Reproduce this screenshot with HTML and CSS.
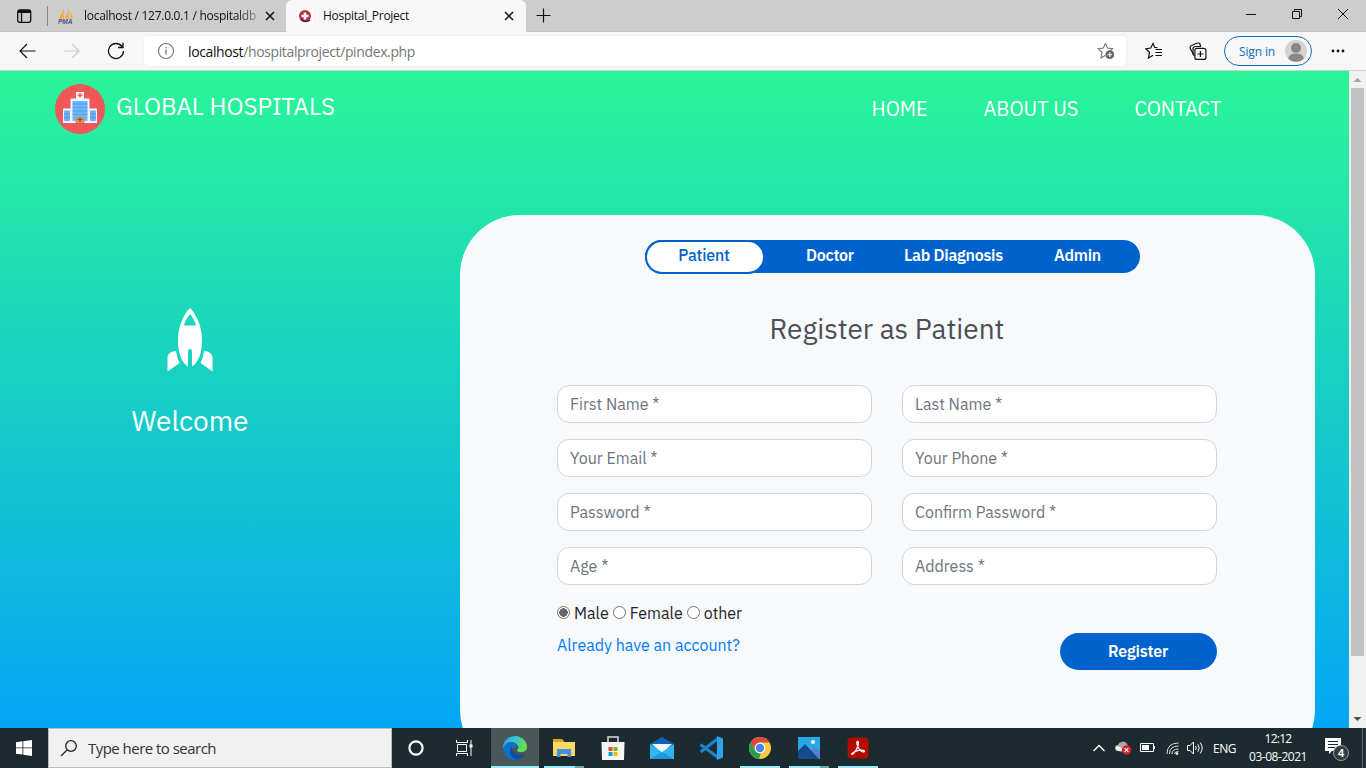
FILE: index.html
```html
<!DOCTYPE html>
<html lang="en">
<head>
<meta charset="utf-8">
<title>Hospital_Project</title>
<link rel="stylesheet" href="styles.css">
</head>
<body>
<div class="screen">
  <header class="tabstrip">
    <svg class="tab-menu" width="16" height="16" viewBox="0 0 16 16" fill="none" stroke="#111" stroke-width="1.3"><rect x="1.7" y="2" width="13" height="12.300" rx="2"/><path d="M2 4h12.500M2 3h12.500" stroke-width="2"/><path d="M5.500 5v9"/></svg>
    <div class="tab tab-back">
      <svg width="16" height="16" viewBox="0 0 16 16"><path d="M6 1 1 10.500h5zM11 0 7 10.500h4zM12 3v7.500h3z" fill="#f8a13a"/><path d="M5 4v6M10 3v7M13 6v4" stroke="#ffd08a" stroke-width=".6"/><text x="0" y="15.500" class="pma">PMA</text></svg>
      <span class="tab-title t-back">localhost / 127.0.0.1 / hospitaldb</span>
      <svg class="x" width="10" height="10" viewBox="0 0 10 10" stroke="#111" stroke-width="1.500"><path d="m1 1 8 8M9 1 1 9"/></svg>
    </div>
    <div class="tab tab-front">
      <svg width="16" height="16" viewBox="0 0 16 16"><path fill="#fff" d="M0 0h16v16H0z"/><circle cx="8" cy="8" r="6" fill="#b92c3f"/><path d="M4 11a6 6 0 0 0 9 1" stroke="#5c1c2c" fill="none" stroke-width="1.500"/><path d="M8 4.500v7M4.500 8h7" stroke="#fff" stroke-width="2.600"/></svg>
      <span class="tab-title t-front">Hospital_Project</span>
      <svg class="x" width="10" height="10" viewBox="0 0 10 10" stroke="#111" stroke-width="1.500"><path d="m1 1 8 8M9 1 1 9"/></svg>
    </div>
    <svg class="newtab" width="15" height="15" viewBox="0 0 15 15" stroke="#111" stroke-width="1.200"><path d="M7.500.5v14M.5 7.500h14"/></svg>
    <div class="winctl">
      <svg width="12" height="12" viewBox="0 0 12 12" stroke="#111"><path d="M1 6.500h10"/></svg>
      <svg width="12" height="12" viewBox="0 0 12 12" stroke="#111" fill="none"><path d="M1.500 3.500h7v7h-7zM3.500 3V1.500h7v7H9"/></svg>
      <svg width="12" height="12" viewBox="0 0 12 12" stroke="#111"><path d="m1 1 10 10M11 1 1 11"/></svg>
    </div>
  </header>

  <div class="toolbar">
    <svg class="back" width="18" height="16" viewBox="0 0 18 16" fill="none" stroke="#111" stroke-width="1.200"><path d="M9 1 2 8l7 7M2 8h15.500"/></svg>
    <svg class="forward" width="18" height="16" viewBox="0 0 18 16" fill="none" stroke="#ccc" stroke-width="1.200"><path d="m9 1 7 7-7 7M16 8H.5"/></svg>
    <svg class="reload" width="18" height="18" viewBox="0 0 18 18" fill="none" stroke="#111" stroke-width="1.300"><path d="M15 4.500A7.500 7.500 0 1 0 16.500 9M16 .8V5.500h-5"/></svg>
    <div class="address">
      <svg width="18" height="18" viewBox="0 0 18 18" fill="none" stroke="#757575" stroke-width="1.100"><circle cx="9" cy="9" r="7.500"/><path d="M9 7.500v5M9 5v1.300" stroke-width="1.300"/></svg>
      <span class="url"><b>localhost</b>/hospitalproject/pindex.php</span>
      <svg class="addfav" width="18" height="18" viewBox="0 0 18 18" fill="none" stroke="#777" stroke-width="1.100"><path d="m8.500 1.300 2.100 4.800 5 .5-3.400 3.500M8.200 13.500 4 16l1-5.500L1.200 6.600l5.200-.6 2.100-4.700"/><circle cx="12.800" cy="12.700" r="4.400" fill="#666" stroke="none"/><path d="M12.800 10.300v4.800M10.400 12.700h4.800" stroke="#fff"/></svg>
    </div>
    <svg class="favs" width="18" height="18" viewBox="0 0 18 18" fill="none" stroke="#111" stroke-width="1.200"><path d="M12.500 5.700 9.800 5.500 8 1.500 5.800 6l-5 .7 3.700 3.500-1 5.800L8 13.200M10.500 7.500H17M10.500 10.500H17M10.500 13.500H17"/></svg>
    <svg class="collect" width="18" height="18" viewBox="0 0 18 18" fill="none" stroke="#111" stroke-width="1.200"><path d="M4.500 12.500 1.300 6.500Q.7 4.300 2.500 3.500L7 1.500q2-.8 3.600-.3l1 2.800"/><path d="M5.500 14Q4 13 4 11V7q0-2.500 2.500-2.500H12"/><rect x="5.900" y="6.400" width="11" height="11" rx="2"/><path d="M11.400 9v6M8.400 12h6"/></svg>
    <div class="signin"><span class="signin-t">Sign in</span><svg width="22" height="22" viewBox="0 0 22 22"><circle cx="11" cy="11" r="11" fill="#d5d2d0"/><circle cx="11" cy="8" r="5" fill="#8b8583"/><path d="M3.200 18.500Q4 13.500 11 13.500t7.800 5A11 11 0 0 1 3.200 18.500z" fill="#8b8583"/></svg></div>
    <svg class="more" width="14" height="4" viewBox="0 0 14 4" fill="#111"><circle cx="2" cy="2" r="1.400"/><circle cx="7" cy="2" r="1.400"/><circle cx="12" cy="2" r="1.400"/></svg>
  </div>

  <div class="viewport">
    <div class="page">
      <nav class="nav">
        <svg class="logo" width="50" height="50" viewBox="0 0 50 50"><circle cx="25" cy="25" r="25" fill="#ef5858"/><path fill="#f3f6fa" d="M8 24.500h34V39H8zM15.500 14.500h19V39h-19zM21 8h8v7h-8z"/><path fill="#6db5fc" d="M17.500 17h15v20h-15zM9 26.500h6V37H9zM35 26.500h6V37h-6z"/><path stroke="#4f9bee" stroke-width=".8" d="M17.500 20h15M17.500 23.500h15M17.500 27h15M17.500 30.500h15M9 30h6M9 33.500h6M35 30h6M35 33.500h6M12 27v10M38 27v10"/><path fill="#c9976b" d="M20.500 32.500h9V39h-9z"/><path stroke="#7a543c" stroke-width="1.200" d="M25 33v5M22.500 35.500h5"/><path stroke="#ef5858" stroke-width="1.500" d="M25 9v4.500M22.800 11.200h4.500"/></svg>
        <span class="brand">GLOBAL HOSPITALS</span>
        <a class="link home">HOME</a>
        <a class="link about">ABOUT US</a>
        <a class="link contact">CONTACT</a>
      </nav>
      <main class="main">
        <aside class="side">
          <svg width="46" height="66" viewBox="0 0 46 66" fill="#fff"><path fill-rule="evenodd" d="M23 1C17 7 11 19 11 33c0 14 4 23 10 26.500V44a2 2 0 0 1 4 0v15.500C31 56 35 47 35 33 35 19 29 7 23 1zm0 6c3 3.500 5 7 6 11.500H17c1-4.500 3-8 6-11.500z"/><path d="M9 44C4 44 .5 47 .5 51v13.500L12.500 56Q10 51 9 44zM37 44c5 0 8.500 3 8.500 7v13.500L33.500 56Q36 51 37 44z"/></svg>
          <h3 class="welcome">Welcome</h3>
        </aside>
        <section class="card">
          <div class="roles">
            <span class="role active">Patient</span>
            <span class="role doctor">Doctor</span>
            <span class="role lab">Lab Diagnosis</span>
            <span class="role admin">Admin</span>
          </div>
          <h3 class="heading">Register as Patient</h3>
          <form class="form">
            <input class="field" placeholder="First Name *">
            <input class="field" placeholder="Last Name *">
            <input class="field" placeholder="Your Email *">
            <input class="field" placeholder="Your Phone *">
            <input class="field" placeholder="Password *">
            <input class="field" placeholder="Confirm Password *">
            <input class="field" placeholder="Age *">
            <input class="field" placeholder="Address *">
            <div class="left">
              <div class="gender">
                <label><i class="dot on"></i>Male</label>
                <label><i class="dot"></i>Female</label>
                <label><i class="dot"></i>other</label>
              </div>
              <a class="already">Already have an account?</a>
            </div>
            <button class="register" type="button">Register</button>
          </form>
        </section>
      </main>
    </div>
    <div class="scroll">
      <svg width="17" height="17" viewBox="0 0 17 17"><path d="M4.500 11 8.500 7l4 4z" fill="#a3a3a3"/></svg>
      <div class="thumb"></div>
      <svg width="17" height="17" viewBox="0 0 17 17"><path d="m4.500 6 4 4 4-4z" fill="#505050"/></svg>
    </div>
  </div>

  <footer class="taskbar">
    <div class="start"><svg width="16" height="16" viewBox="0 0 16 16" fill="#fff"><path d="M0 2.200 6.500 1.300v6.200H0zM7.300 1.200 16 0v7.500H7.300zM0 8.300h6.500v6.300L0 13.700zM7.300 8.300H16V16l-8.700-1.300z"/></svg></div>
    <div class="search"><svg width="18" height="18" viewBox="0 0 18 18" fill="none" stroke="#222" stroke-width="1.300"><circle cx="11" cy="7" r="5.300"/><path d="m7 11-6 6"/></svg><span class="search-t">Type here to search</span></div>
    <div class="cell c48"><svg width="16" height="16" viewBox="0 0 16 16"><circle cx="8" cy="8" r="6.600" fill="none" stroke="#fff" stroke-width="2.200"/></svg></div>
    <div class="cell c51"><svg width="17" height="16" viewBox="0 0 17 16" fill="none" stroke="#fff"><path d="M.5 0v2.500h11V0M.5 16v-2.500h11V16M1.500 4.500h9v7h-9zM15 0v16"/><path d="M13.500 4.500h3v3h-3z" fill="#fff" stroke="none"/></svg></div>
    <div class="cell current"><svg width="24" height="24" viewBox="0 0 24 24"><defs><linearGradient id="eg" x1="0" y1="0" x2="1" y2=".4"><stop offset="0" stop-color="#2aa7dc"/><stop offset=".5" stop-color="#35c1d8"/><stop offset="1" stop-color="#68e04c"/></linearGradient></defs><path fill="#0c71c9" d="M0 12Q1 6 8 6q6 0 7.500 5Q11 9 9 13q-1 6 6 7 4 0 7-3-4 7-11 7Q1 23 0 12z"/><path fill="url(#eg)" d="M0 12C0 5 5 0 12 0s12 5 12 11q0 5-6 5-4 0-4-2 1.500-1 1.500-3C15 8 12 6 8 6Q3 6 0 12z"/><path fill="#0b4f9e" d="M8.500 10C5 16 8 23 14 23.500c4-.5 7-4 8.200-6.200Q18 20 13.500 18 8.500 15.500 8.500 10z"/></svg></div>
    <div class="cell run split"><svg width="22" height="20" viewBox="0 0 22 20"><path fill="#e5a11b" d="M0 1h9l2 2v3H0z"/><path fill="#ffd767" d="M0 4h22v14H0z"/><path fill="#3d94d9" d="M4 11h14v8h-3.500v-3h-7v3H4z"/></svg></div>
    <div class="cell"><svg width="24" height="24" viewBox="0 0 24 24"><path d="M7 7V1h10v6" stroke="#ddd" stroke-width="1.500" fill="none"/><path fill="#f5f5f5" d="M.5 6h23l-.5 18H1z"/><path fill="#e84c24" d="M7.500 11h4v4h-4z"/><path fill="#7fba00" d="M12.500 11h4v4h-4z"/><path fill="#00a4ef" d="M7.500 16h4v4h-4z"/><path fill="#ffb900" d="M12.500 16h4v4h-4z"/></svg></div>
    <div class="cell"><svg width="24" height="22" viewBox="0 0 24 22"><path fill="#0f64b4" d="M0 7 12 0l12 7v7H0z"/><path fill="#f4f8fc" d="M2 7h20l-8 8h-4z"/><path fill="#31b5f1" d="m0 7 12 8L24 7v15H0z"/><path fill="#2395df" d="M0 22 12 15l12 7z"/></svg></div>
    <div class="cell"><svg width="24" height="24" viewBox="0 0 24 24"><path fill="none" stroke="#1b83cc" stroke-width="3.200" d="M19 2.500 1.500 16M1.500 8.500 19 21.500"/><path fill="#2ba4ec" d="m18 0 6 2.500v19L18 24z"/></svg></div>
    <div class="cell run"><svg width="22" height="22" viewBox="0 0 22 22"><circle cx="11" cy="11" r="11" fill="#fbcd3e"/><path fill="#d84b3e" d="M1.500 5.500A11 11 0 0 1 20.500 5.500H11L6.200 13.500z"/><path fill="#2b9c50" d="M1.500 5.500 6.200 13.500Q8 16.500 12 16L10 22A11 11 0 0 1 1.500 5.500z"/><circle cx="11" cy="11" r="5.400" fill="#fff"/><circle cx="11" cy="11" r="4.200" fill="#4384ed"/></svg></div>
    <div class="cell run split"><svg width="22" height="22" viewBox="0 0 22 22"><path fill="#28a7e9" d="M0 0h22v22H0z"/><path fill="#5c7fcc" d="m11 15 6-5 5 4v8H11z"/><path fill="#164a89" d="M0 14 7 7l14 15H0z"/><circle cx="15" cy="5" r="2" fill="#fff"/></svg></div>
    <div class="cell run"><svg width="22" height="22" viewBox="0 0 22 22"><rect x=".5" y=".5" width="21" height="21" rx="4" fill="#b30b00"/><path d="M10.500 4.500c-1.500 0 0 6 2.500 8.500s4.500 2 4.500 1-6-1.500-10 .8-3 3.200-1.500 2.200C8.500 15 12 8 11.500 5.500q-.3-1-1-1z" fill="none" stroke="#fff" stroke-width="1.300"/></svg></div>
    <div class="tray">
      <svg class="chev" width="12" height="8" viewBox="0 0 12 8" fill="none" stroke="#fff" stroke-width="1.300"><path d="m.5 7 5.500-5.500L11.500 7"/></svg>
      <svg class="cloud" width="17" height="14" viewBox="0 0 17 14"><path d="M3 10a3 3 0 0 1 0-6 5 5 0 0 1 9-1l2 4-6 4z" fill="#aaa"/><path d="M1 5q5 0 8 5H3Q0 9 1 5z" fill="#eee"/><circle cx="11.500" cy="9" r="4.700" fill="#d9262c"/><path d="m9.700 7.200 3.600 3.600M13.300 7.200l-3.600 3.600" stroke="#fff" stroke-width="1.200"/></svg>
      <svg class="batt" width="16" height="10" viewBox="0 0 16 10"><path d="M.5.5h13v8H.5zM14.500 3v3" fill="none" stroke="#fff"/><path d="M2 2h7v5H2z" fill="#fff"/></svg>
      <svg class="wifi" width="13" height="13" viewBox="0 0 13 13" fill="none" stroke="#ddd"><path d="M1 12Q1 1 12.500 1M3.500 12Q3.500 4 12.500 4M6 12q0-5 6.500-5M8.500 12q0-2.500 4-2.500"/><circle cx="11" cy="11.500" r="1" fill="#fff"/></svg>
      <svg class="vol" width="17" height="14" viewBox="0 0 17 14" fill="none" stroke="#fff"><path d="M.5 4.500h2.500L6.500 1v12L3 9.500H.5zM8.500 5q1.500 2 0 4M10.800 3.300q3 3.700 0 7.400M13.200 1.500q4 5.500 0 11"/></svg>
      <span class="lang">ENG</span>
      <div class="clock"><span class="time">12:12</span><span class="date">03-08-2021</span></div>
      <svg class="notif" width="26" height="26" viewBox="0 0 26 26"><path fill="#fff" d="M1 1h16v13H8l-3 3v-3H1z"/><path d="M4 4.500h10M4 7.500h10M4 10.500h7" stroke="#1c2b2f"/><circle cx="17" cy="16" r="7.500" fill="#333b3e" stroke="#999"/><text x="17" y="20" text-anchor="middle" class="badge">4</text></svg>
      <div class="peek"></div>
    </div>
  </footer>
</div>
</body>
</html>
```

FILE: styles.css
```css
* { box-sizing: border-box; }
body { margin: 0; overflow: hidden; font-family: "IBM Plex Sans", "Noto Sans", sans-serif; }
svg { display: block; flex: none; }
.screen { width: 1366px; height: 768px; display: flex; flex-direction: column; overflow: hidden; }
.tabstrip, .toolbar, .taskbar { font-family: "Segoe UI", "Open Sans", sans-serif; flex: none; white-space: nowrap; }

.tabstrip { height: 32px; background: #cdcdcd; display: flex; align-items: center; border-bottom: 1px solid #c2c2c2; }
.tab-menu { margin-left: 16px; }
.tab { height: 32px; display: flex; align-items: center; font-size: 12px; color: #111; letter-spacing: -.28px; }
.tab-back { margin-left: 14px; width: 239px; padding-left: 12px; position: relative; }
.tab-back::before { content: ""; position: absolute; left: 1px; top: 6px; width: 1px; height: 20px; background: #888; }
.tab-title { margin-left: 10px; flex: none; overflow: hidden; }
.t-back { width: 173px; -webkit-mask-image: linear-gradient(90deg, #000 88%, #0004 100%); }
.tab-back .x { margin-left: 8px; }
.tab-front { margin-left: 1px; width: 240px; background: #f7f7f7; border-radius: 6px 6px 0 0; padding-left: 11px; }
.tab-front .x { margin-left: auto; margin-right: 12px; }
.newtab { margin-left: 10px; }
.pma { font: italic bold 6.500px "Liberation Sans", sans-serif; letter-spacing: 0; fill: #4c4f87; }
.winctl { margin-left: auto; display: flex; gap: 34px; margin-right: 17px; margin-top: -4px; }

.toolbar { height: 39px; background: #f7f7f7; display: flex; align-items: center; border-bottom: 1px solid #d0d0d0; }
.back { margin-left: 18px; }
.forward { margin-left: 27px; }
.reload { margin-left: 26px; }
.address { margin-left: 19px; width: 982px; height: 30px; background: #fff; border-radius: 4px; display: flex; align-items: center; padding-left: 13px; box-shadow: 0 0 2px #e4e4e4; }
.url { margin-left: 13px; font-size: 14px; letter-spacing: -.38px; color: #767676; }
.url b { font-weight: 400; color: #111; }
.addfav { margin-left: auto; margin-right: 11px; }
.favs { margin-left: 19px; }
.collect { margin-left: 26px; }
.signin { margin-left: 17px; width: 88px; height: 30px; border: 1.500px solid #0f6cbd; border-radius: 15px; display: flex; align-items: center; padding: 0 4px 0 14px; justify-content: space-between; color: #0f6cbd; font-size: 12px; }
.signin-t { letter-spacing: -.14px; }
.more { margin-left: 19px; }

.viewport { height: 657px; flex: none; display: flex; overflow: hidden; }
.page { width: 1349px; height: 722px; background: linear-gradient(#2af598, #009efd); }
.scroll { width: 17px; background: #f1f1f1; display: flex; flex-direction: column; }
.thumb { height: 568px; margin: 0 2px auto; background: #c1c1c1; }

.nav { height: 76px; padding: 13px 0 0 55px; display: flex; color: #fff; white-space: nowrap; }
.brand { margin-left: 11px; width: 755.500px; font-size: 24px; line-height: 44px; }
.link { font-size: 20px; line-height: 50px; flex: none; }
.home { width: 112px; }
.about { width: 151px; }

.main { display: flex; padding-top: 68px; }
.side { width: 380px; margin-right: 80px; padding-top: 92px; display: flex; flex-direction: column; align-items: center; }
.welcome { margin: 31px 0 0; color: #fff; font-size: 28px; font-weight: 400; line-height: 34px; }
.card { width: 855px; height: 555px; background: #f8f9fa; border-radius: 60px; padding: 25px 98px 0 97px; }
.roles { margin-left: 88px; width: 495px; height: 33px; border-radius: 17px; background: #0062cc; display: flex; color: #fff; font-size: 16px; font-weight: 600; letter-spacing: -.28px; line-height: 30px; white-space: nowrap; }
.active { width: 120px; height: 34px; border: 2px solid #0062cc; border-radius: 17px; background: #fff; color: #0062cc; text-align: center; line-height: 27px; font-weight: 500; letter-spacing: -.2px; padding-right: 2px; }
.doctor { margin-left: 41px; width: 98px; }
.lab { width: 150px; }
.heading { margin: 38px 0 0; text-align: center; font-size: 28px; font-weight: 400; line-height: 35px; color: #495057; }
.form { margin-top: 39px; display: grid; grid-template-columns: 315px 315px; column-gap: 30px; row-gap: 16px; }
.field { width: 315px; height: 38px; border: 1px solid #ced4da; border-radius: 12px; background: #fff; padding: 0 12px; font: 16px "IBM Plex Sans", "Noto Sans", sans-serif; }
.field::placeholder { color: #6c757d; opacity: 1; }
.left { font-size: 16px; color: #212529; white-space: nowrap; }
.gender { display: flex; gap: 4px; height: 24px; line-height: 24px; }
.gender label { display: flex; }
.dot { width: 13px; height: 13px; border: 1px solid #767676; border-radius: 50%; background: #fff; margin: 5px 4px 0 0; }
.on { background: radial-gradient(circle, #666 0 4px, #fff 4.500px); }
.already { display: block; margin-top: 8px; line-height: 24px; color: #007bff; }
.register { justify-self: end; margin-top: 32px; width: 157px; height: 37px; border: 0; border-radius: 19px; background: #0062cc; color: #fff; font: 600 16px "IBM Plex Sans", "Noto Sans", sans-serif; letter-spacing: -.18px; padding: 0 1px 1px 0; }

.taskbar { height: 40px; background: #1c2b2f; display: flex; color: #fff; }
.start { width: 48px; display: flex; align-items: center; justify-content: center; }
.search { width: 344px; background: #f1f1f1; border: 1px solid #bbb; display: flex; align-items: center; padding-left: 11px; color: #333; font-size: 15px; }
.search-t { margin-left: 10px; letter-spacing: -.53px; }
.cell { width: 49px; display: flex; align-items: center; justify-content: center; position: relative; padding-right: 1px; }
.c48 { width: 48px; padding-right: 0; }
.c51 { width: 51px; padding-right: 3px; }
.current { width: 48px; background: #49565a; margin-right: 1px; padding-right: 0; }
.current::after, .run::after { content: ""; position: absolute; left: 0; right: 0; bottom: 0; height: 2px; background: #99ebf7; }
.run::after { left: 4px; right: 5px; }
.split::after { background: linear-gradient(90deg, #99ebf7 31px, #6ba3ab 31px); }
.tray { margin-left: auto; display: flex; align-items: center; font-size: 12px; }
.cloud { margin-left: 10px; }
.batt { margin-left: 8px; }
.wifi { margin-left: 10px; }
.vol { margin-left: 8px; }
.lang { margin-left: 9px; letter-spacing: -.48px; }
.clock { margin-left: 13px; width: 58px; display: flex; flex-direction: column; align-items: center; line-height: 18px; }
.time { letter-spacing: -.72px; }
.date { letter-spacing: -.46px; }
.notif { margin-left: 17px; margin-top: 4px; }
.peek { width: 1px; height: 40px; background: #5c686b; margin: 0 3px 0 12px; }
.badge { font: bold 11px "Liberation Sans", sans-serif; fill: #fff; }
```
